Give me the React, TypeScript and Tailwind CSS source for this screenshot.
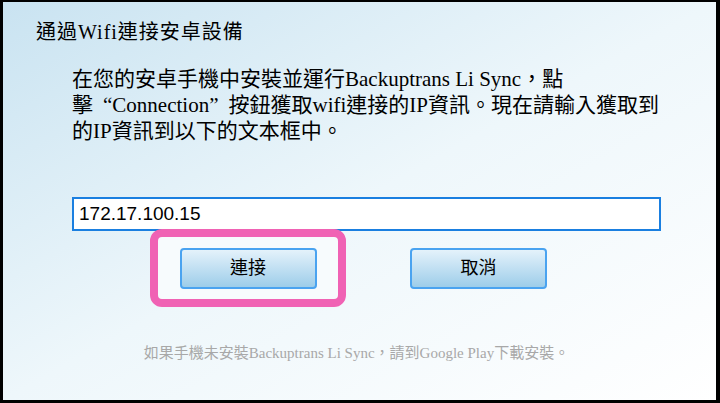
import React, { useState } from 'react';

const cjk = "font-['Liberation_Serif','Noto_Sans_CJK_TC',serif]";

function DialogButton({ label }: { label: string }) {
  return (
    <button
      className={`w-[137px] h-[41px] rounded-[4px] border-2 border-[#4aa3f0] bg-gradient-to-b from-[#e4f2fb] to-[#9dcde9] text-[18px] text-black ${cjk}`}
    >
      {label}
    </button>
  );
}

export default function App() {
  const [ip, setIp] = useState('172.17.100.15');

  return (
    <div className="w-[720px] h-[403px] bg-black pt-[2px] pl-[3px] pr-[4px] pb-[3px]">
      <div className={`h-full flex flex-col bg-gradient-to-br from-[#c9e3f1] via-[#eef7fb] to-white ${cjk}`}>
        <h1 className="pl-[33px] pt-[19px] text-[20px] leading-[22px] tracking-[1px] text-black">通過Wifi連接安卓設備</h1>

        <p className="pl-[69px] pt-[23px] text-[21px] leading-[26px] text-black">
          <span className="block">在您的安卓手機中安裝並運行Backuptrans Li Sync，點</span>
          <span className="block">
            擊<span className="mx-[10px]">“Connection”</span>按鈕獲取wifi連接的IP資訊。現在請輸入獲取到
          </span>
          <span className="block">的IP資訊到以下的文本框中。</span>
        </p>

        <div className="pl-[69px] pt-[53px]">
          <input
            autoFocus
            value={ip}
            onChange={(e) => setIp(e.target.value)}
            className="w-[589px] h-[34px] border-2 border-[#1a7fe0] bg-white px-[5px] text-[19px] text-black caret-black outline-none font-['Liberation_Sans',sans-serif]"
          />
        </div>

        <div className="flex items-center pl-[147px]">
          <div className="w-[196px] h-[78px] -mt-[2px] rounded-[12px] border-[8px] border-[#f062b4] bg-[#f7fbfd] flex items-center justify-center">
            <DialogButton label="連接" />
          </div>
          <div className="ml-[64px] -mt-[2px]">
            <DialogButton label="取消" />
          </div>
        </div>

        <p className="mt-[35px] text-center text-[15px] text-[#a8a8a8] pr-[6px]">
          如果手機未安裝Backuptrans Li Sync，請到Google Play下載安裝。
        </p>
      </div>
    </div>
  );
}
